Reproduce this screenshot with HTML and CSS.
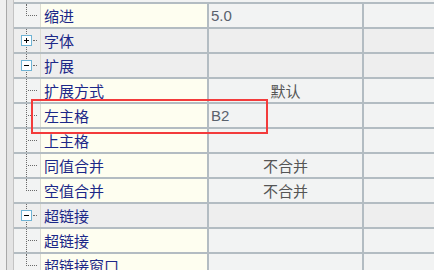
FILE: index.html
```html
<!DOCTYPE html>
<html lang="zh-CN">
<head>
    <meta charset="UTF-8">
    <meta name="viewport" content="width=device-width, initial-scale=1.0">
    <title>属性表</title>
    <link rel="stylesheet" href="styles.css">
</head>
<body>
    <div class="sheet">
        <div class="rail"></div>
        <div class="grid">
            <div class="row">
                <div class="tree last"></div>
                <div class="name">缩进</div>
                <div class="value">5.0</div>
                <div class="extra"></div>
            </div>
            <div class="row group">
                <div class="tree node">
                    <svg class="toggle" width="11" height="11" viewBox="0 0 11 11"><rect x="0.5" y="0.5" width="10" height="10" fill="#fff" stroke="#6fb3d4"/><path d="M3 5.5h5M5.5 3v5" stroke="#000"/></svg>
                </div>
                <div class="name">字体</div>
                <div class="value"></div>
                <div class="extra"></div>
            </div>
            <div class="row group">
                <div class="tree node">
                    <svg class="toggle" width="11" height="11" viewBox="0 0 11 11"><rect x="0.5" y="0.5" width="10" height="10" fill="#fff" stroke="#6fb3d4"/><path d="M3 5.5h5" stroke="#000"/></svg>
                </div>
                <div class="name">扩展</div>
                <div class="value"></div>
                <div class="extra"></div>
            </div>
            <div class="row">
                <div class="tree"></div>
                <div class="name">扩展方式</div>
                <div class="value center">默认</div>
                <div class="extra"></div>
            </div>
            <div class="row">
                <div class="tree"></div>
                <div class="name">左主格</div>
                <div class="value">B2</div>
                <div class="extra"></div>
            </div>
            <div class="row">
                <div class="tree"></div>
                <div class="name">上主格</div>
                <div class="value"></div>
                <div class="extra"></div>
            </div>
            <div class="row">
                <div class="tree"></div>
                <div class="name">同值合并</div>
                <div class="value center">不合并</div>
                <div class="extra"></div>
            </div>
            <div class="row">
                <div class="tree last"></div>
                <div class="name">空值合并</div>
                <div class="value center">不合并</div>
                <div class="extra"></div>
            </div>
            <div class="row group">
                <div class="tree node">
                    <svg class="toggle" width="11" height="11" viewBox="0 0 11 11"><rect x="0.5" y="0.5" width="10" height="10" fill="#fff" stroke="#6fb3d4"/><path d="M3 5.5h5" stroke="#000"/></svg>
                </div>
                <div class="name">超链接</div>
                <div class="value"></div>
                <div class="extra"></div>
            </div>
            <div class="row">
                <div class="tree"></div>
                <div class="name">超链接</div>
                <div class="value"></div>
                <div class="extra"></div>
            </div>
            <div class="row">
                <div class="tree last"></div>
                <div class="name">超链接窗口</div>
                <div class="value"></div>
                <div class="extra"></div>
            </div>
        </div>
        <!-- annotation box drawn over the 左主格 row -->
        <div class="highlight"></div>
    </div>
</body>
</html>
```

FILE: styles.css
```css
body {
    margin: 0;
    padding: 0;
    background: #f2f3f3;
    font-family: "Noto Sans CJK SC", "Liberation Sans", sans-serif;
    overflow: hidden;
}
.sheet {
    display: flex;
    position: relative;
    height: 270px;
}
.rail {
    width: 14px;
    flex: none;
    background: linear-gradient(to right, #f0f0f0 0 6px, #a9a9a9 6px 7px, #e4e4e4 7px 13px, #c3c3c3 13px 14px);
}
.grid {
    flex: 1;
    padding-top: 2px;
}
.row {
    display: grid;
    grid-template-columns: 26px 169px 155px 1fr;
    height: 25px;
    box-sizing: border-box;
    border-top: 2px solid #b3bcc2;
    background: #f2f3f3;
}
.row.group {
    background: #eeeeee;
}
.tree {
    position: relative;
}
.tree::before {
    content: '';
    position: absolute;
    left: 12px;
    top: 0;
    bottom: 0;
    border-left: 1px dotted #6a6a6a;
}
.tree.last::before {
    bottom: 11px;
}
.tree::after {
    content: '';
    position: absolute;
    left: 14px;
    top: 11px;
    width: 9px;
    border-top: 1px dotted #6a6a6a;
}
.tree.node::after {
    left: 19px;
    width: 4px;
}
.toggle {
    position: absolute;
    left: 7px;
    top: 6px;
    display: block;
}
.name {
    box-sizing: border-box;
    padding-left: 3px;
    border-left: 1px solid #dcdcd2;
    border-right: 2px solid #b3bcc2;
    background: #fefef0;
    color: #1c2888;
    font-size: 15px;
    line-height: 23px;
    white-space: nowrap;
}
.group .name {
    background: #eeeeee;
}
.value {
    box-sizing: border-box;
    padding-left: 2px;
    border-right: 2px solid #b3bcc2;
    color: #59616d;
    font-family: "Liberation Sans", "Noto Sans CJK SC", sans-serif;
    font-size: 15px;
    line-height: 23px;
    white-space: nowrap;
}
.value.center {
    text-align: center;
    padding-left: 0;
    font-family: "Noto Sans CJK SC", sans-serif;
    color: #555555;
}
.highlight {
    position: absolute;
    left: 31px;
    top: 99px;
    width: 237px;
    height: 35px;
    box-sizing: border-box;
    border: 2px solid #f33b3b;
}
```
